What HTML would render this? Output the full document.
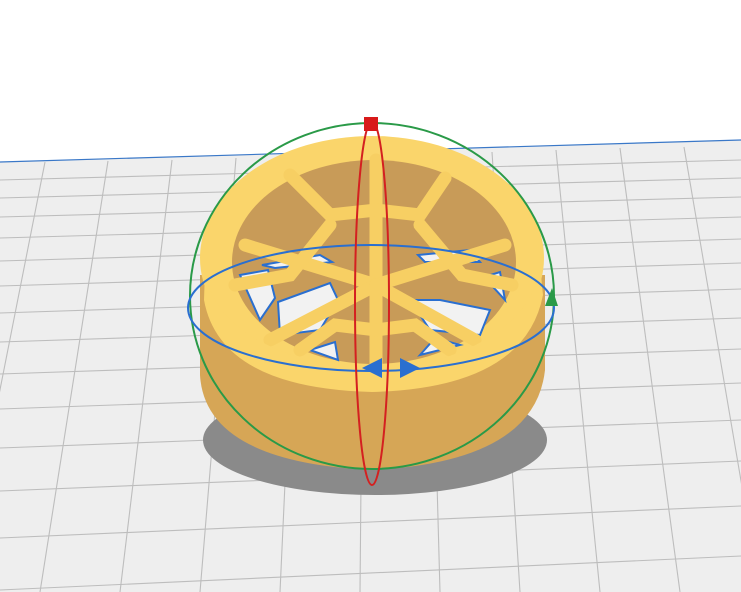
<!DOCTYPE html><html><head><style>html,body{margin:0;padding:0;background:#fff}svg{display:block}</style></head><body>
<svg width="741" height="592" viewBox="0 0 741 592" xmlns="http://www.w3.org/2000/svg">
<polygon points="0,162 741,140 741,592 0,592" fill="#eeeeee"/>
<g stroke="#bdbdbd" stroke-width="1.1" fill="none">
<line x1="0" y1="180" x2="741" y2="160"/>
<line x1="0" y1="198" x2="741" y2="178"/>
<line x1="0" y1="217" x2="741" y2="197"/>
<line x1="0" y1="238" x2="741" y2="217"/>
<line x1="0" y1="261" x2="741" y2="239"/>
<line x1="0" y1="286" x2="741" y2="263"/>
<line x1="0" y1="313" x2="741" y2="289"/>
<line x1="0" y1="342" x2="741" y2="318"/>
<line x1="0" y1="374" x2="741" y2="349"/>
<line x1="0" y1="409" x2="741" y2="383"/>
<line x1="0" y1="448" x2="741" y2="420"/>
<line x1="0" y1="491" x2="741" y2="461"/>
<line x1="0" y1="538" x2="741" y2="506"/>
<line x1="0" y1="590" x2="741" y2="556"/>
<line x1="-270" y1="592" x2="-84" y2="160"/>
<line x1="-112" y1="592" x2="-20" y2="160"/>
<line x1="-40" y1="592" x2="45" y2="162"/>
<line x1="40" y1="592" x2="108" y2="161"/>
<line x1="120" y1="592" x2="172" y2="160"/>
<line x1="200" y1="592" x2="236" y2="158"/>
<line x1="280" y1="592" x2="300" y2="157"/>
<line x1="360" y1="592" x2="364" y2="155"/>
<line x1="440" y1="592" x2="428" y2="154"/>
<line x1="520" y1="592" x2="492" y2="152"/>
<line x1="600" y1="592" x2="556" y2="150"/>
<line x1="680" y1="592" x2="620" y2="148"/>
<line x1="760" y1="592" x2="684" y2="147"/>
<line x1="840" y1="592" x2="748" y2="146"/>
</g>
<line x1="0" y1="162" x2="741" y2="140" stroke="#3a78c8" stroke-width="1.2"/>
<ellipse cx="375" cy="440" rx="172" ry="55" fill="#8a8a8a"/>
<path d="M200,275 L200,375 Q205,462 372,470 Q535,462 545,370 L545,275 Z" fill="#d6a656"/>
<ellipse cx="372" cy="258" rx="172" ry="122" fill="#fad56b"/>
<ellipse cx="374" cy="262" rx="142" ry="102" fill="#c89b58"/>
<g fill="#f2f2f2" stroke="#2a6fd0" stroke-width="2">
<polygon points="240,275 268,270 275,298 260,320"/>
<polygon points="278,302 330,283 338,300 320,330 280,335"/>
<polygon points="310,350 335,342 338,360"/>
<polygon points="410,300 440,300 490,310 480,335 430,330"/>
<polygon points="420,355 435,338 460,345"/>
<polygon points="484,277 500,272 505,300"/>
<polygon points="262,265 320,255 332,262 275,268"/>
<polygon points="418,255 470,250 480,262 425,262"/>
</g>
<g stroke="#f7cf63" stroke-width="13" stroke-linecap="round" fill="none">
<line x1="376" y1="285" x2="376" y2="160"/>
<line x1="376" y1="285" x2="245" y2="245"/>
<line x1="376" y1="285" x2="505" y2="245"/>
<line x1="376" y1="285" x2="270" y2="340"/>
<line x1="376" y1="285" x2="475" y2="340"/>
<line x1="376" y1="285" x2="376" y2="365"/>
<polyline points="290,175 330,215 376,210 420,215 445,178"/>
<polyline points="235,285 290,275 330,225"/>
<polyline points="512,285 462,275 420,225"/>
<polyline points="300,350 335,325 376,330 415,325 450,350"/>
</g>
<path d="M205,270 Q215,350 372,375 Q530,350 540,265 L543,295 Q525,388 372,392 Q220,388 204,300 Z" fill="#fad56b"/>
<ellipse cx="372" cy="296" rx="182" ry="173" fill="none" stroke="#2a9a48" stroke-width="2"/>
<ellipse cx="371" cy="308" rx="183" ry="63" fill="none" stroke="#2a6fd0" stroke-width="2"/>
<ellipse cx="372" cy="303" rx="17" ry="182" fill="none" stroke="#d42020" stroke-width="2"/>
<rect x="364" y="117" width="14" height="14" fill="#d81a1a"/>
<polygon points="362,368 382,358 382,378" fill="#2a6fd0"/>
<polygon points="420,368 400,358 400,378" fill="#2a6fd0"/>
<polygon points="552,288 545,306 558,306" fill="#2a9a48"/>
</svg>
</body></html>
